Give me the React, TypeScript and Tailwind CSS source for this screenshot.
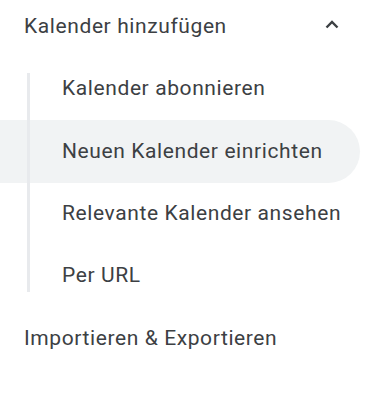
const items = [
  { label: "Kalender abonnieren", active: false },
  { label: "Neuen Kalender einrichten", active: true },
  { label: "Relevante Kalender ansehen", active: false },
  { label: "Per URL", active: false },
];

export default function App() {
  return (
    <div
      className="w-[383px] h-[394px] bg-white text-[#3c4043] text-[21px] tracking-[0.6px] overflow-hidden"
      style={{ fontFamily: "Roboto, 'Noto Sans', sans-serif" }}
    >
      <div className="h-[53px] flex items-center justify-between pl-6 pr-[44px]">
        <span>Kalender hinzufügen</span>
        <svg className="mb-[4px]" width="14" height="9" viewBox="0 0 14 9" fill="none">
          <polyline
            points="1.5,7.5 7,2 12.5,7.5"
            stroke="#3c4043"
            strokeWidth="2.4"
          />
        </svg>
      </div>
      <div className="relative pt-[5px]">
        <div className="absolute left-[27px] top-[20px] bottom-[15px] w-[3px] bg-[#e8eaed]" />
        {items.map((item) => (
          <div
            key={item.label}
            className={
              item.active
                ? "h-[63px] w-[360px] flex items-center pl-[62px] bg-[#f1f3f4] rounded-r-full"
                : "h-[62px] w-[360px] flex items-center pl-[62px]"
            }
          >
            {item.label}
          </div>
        ))}
      </div>
      <div className="h-[63px] flex items-center pl-6">Importieren &amp; Exportieren</div>
    </div>
  );
}
